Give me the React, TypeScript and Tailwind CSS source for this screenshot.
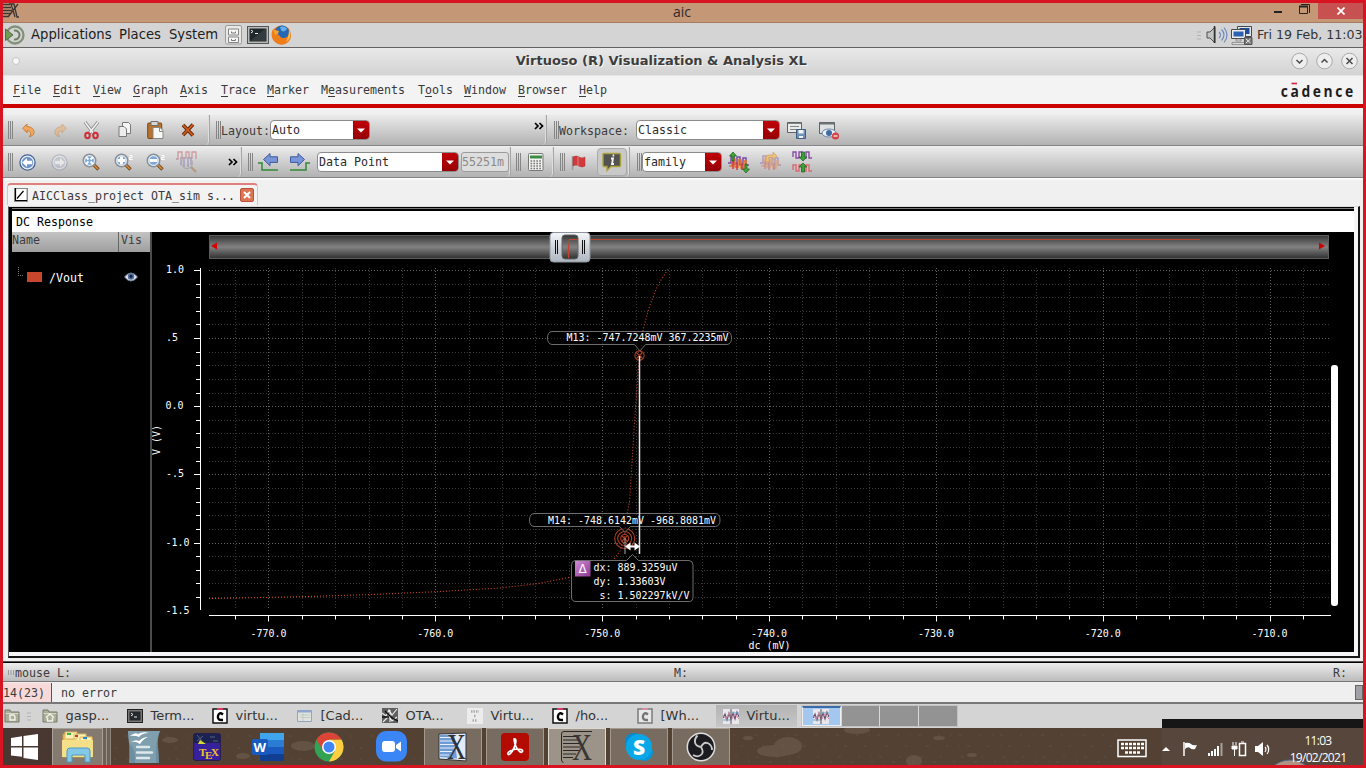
import React from "react";

type Kids = { children?: React.ReactNode };

const MENU: [string, string, string, string][] = [
  ["", "F", "ile", "w-10"],
  ["", "E", "dit", "w-10"],
  ["", "V", "iew", "w-10"],
  ["", "G", "raph", "w-[47px]"],
  ["", "A", "xis", "w-[41px]"],
  ["", "T", "race", "w-[46px]"],
  ["", "M", "arker", "w-[54px]"],
  ["M", "e", "asurements", "w-[97px]"],
  ["T", "o", "ols", "w-[46px]"],
  ["", "W", "indow", "w-[54px]"],
  ["", "B", "rowser", "w-[61px]"],
  ["", "H", "elp", "w-10"],
];

function Grip() {
  return (
    <div className="flex h-[18px] w-[5px] shrink-0 justify-between">
      <i className="w-px bg-[#858585]" />
      <i className="w-px bg-[#858585]" />
      <i className="w-px bg-[#858585]" />
    </div>
  );
}

function Group({ w, children }: Kids & { w: string }) {
  return (
    <div
      className={
        "flex h-full shrink-0 items-center rounded-br-[4px] border-r border-r-[#a5a5a5] pl-[5px] shadow-[inset_-1px_0_0_#dedede] " + w
      }
    >
      {children}
    </div>
  );
}

function Combo({ w, label }: { w: string; label: string }) {
  return (
    <div className={"flex h-[20px] shrink-0 overflow-hidden rounded-[4px] border border-[#8b8b8b] bg-white text-[#2b2b2b] " + w}>
      <span className="flex-1 pl-[1px] leading-[18px]">{label}</span>
      <span className="flex w-[16px] items-center justify-center bg-linear-to-b from-[#c00008] to-[#960005]">
        <svg width="8" height="5" viewBox="0 0 8 5">
          <path d="M0 0.5h8L4 4.5z" fill="#fff" />
        </svg>
      </span>
    </div>
  );
}

function Ico({ w, h, className, children }: Kids & { w: number; h: number; className?: string }) {
  return (
    <svg width={w} height={h} viewBox={`0 0 ${w} ${h}`} className={"block shrink-0 " + (className ?? "")}>
      {children}
    </svg>
  );
}

function More() {
  return (
    <Ico w={10} h={8}>
      <path d="M1 1l3 3-3 3M5.500 1l3 3-3 3" fill="none" stroke="#000" strokeWidth="1.700" />
    </Ico>
  );
}

function Undo({ flip }: { flip?: boolean }) {
  return (
    <g transform={flip ? "translate(13 0) scale(-1 1)" : undefined} opacity={flip ? 0.45 : 1}>
      <path d="M0.7 5.2 5 1v2.6c5 .2 7.200 2.800 7 6C11.800 12.500 9 13.600 7 13.600 9.500 12 9.600 8 5 7.600v2.300z" fill="#f0a860" stroke="#c47a2c" strokeWidth=".9" />
    </g>
  );
}

function Cut() {
  return (
    <g fill="none">
      <path d="M2 1 11 13M15 1 5.500 13" stroke="#8b8f8d" strokeWidth="3.200" />
      <path d="M2 1 10.500 12.500M15 1 6 12.500" stroke="#f1f1f1" strokeWidth="1.500" />
      <ellipse cx="4.500" cy="14.500" rx="2.300" ry="2.700" stroke="#cf2c35" strokeWidth="2" />
      <ellipse cx="12.500" cy="14.500" rx="2.300" ry="2.700" stroke="#cf2c35" strokeWidth="2" />
    </g>
  );
}

function Lens({ kind }: { kind: "fit" | "in" | "out" }) {
  return (
    <g>
      <path d="M11 11l5.500 5.500" stroke="#7c4a1c" strokeWidth="3.400" />
      <path d="M11.500 11.500l4.500 4.500" stroke="#d58b3c" strokeWidth="1.600" />
      <circle cx="7.500" cy="7.500" r="6.200" fill="#7ba8d6" stroke="#8c9093" strokeWidth="1.600" />
      <circle cx="7.500" cy="7.500" r="4.900" fill="none" stroke="#e6edf5" strokeWidth="1.100" />
      {kind === "fit" && <path d="M4 4l2.500 2.500M11 4 8.500 6.500M4 11l2.500-2.500M11 11 8.500 8.500" stroke="#fff" strokeWidth="1.800" />}
      {kind === "in" && <path d="M7.500 3.500v8M3.500 7.500h8" stroke="#fff" strokeWidth="3" />}
      {kind === "out" && <path d="M3.500 7.500h8" stroke="#fff" strokeWidth="3" />}
      {kind !== "fit" && <path d="M15.500 2.500h2.500v2h-2.500v2H18.500" fill="none" stroke="#fff" strokeWidth="1" />}
    </g>
  );
}

function NavDot({ flip }: { flip?: boolean }) {
  return (
    <g transform={flip ? "translate(17 0) scale(-1 1)" : undefined} opacity={flip ? 0.5 : 1}>
      <circle cx="8.500" cy="8.500" r="7.600" fill={flip ? "#b4bac8" : "#6f93c8"} stroke={flip ? "#8a92a6" : "#3d5c8f"} strokeWidth="1.200" />
      <circle cx="8.500" cy="8.500" r="6.300" fill="none" stroke="#e9eff8" strokeWidth="1.200" />
      <path d="M3.200 8.500 8 4v2.800h5.200v3.400H8V13z" fill="#fff" />
    </g>
  );
}

function StepArrow({ flip }: { flip?: boolean }) {
  return (
    <g transform={flip ? "translate(21 0) scale(-1 1)" : undefined}>
      <path d="M0 11h4v7h16" fill="none" stroke="#2f8a36" strokeWidth="1.500" />
      <path d="M5.500 7.500 12 1.500v3.300h7.500v5.600H12v3.300z" fill="#7895d8" stroke="#3d5aa0" strokeWidth="1" />
    </g>
  );
}

function WaveBits({ faded }: { faded?: boolean }) {
  return (
    <g fill="none" strokeWidth="1.500" opacity={faded ? 0.42 : 1}>
      <path d="M0 11h3V4h3v8h3V5h3v8h3V6h3v7h3" stroke="#7a49a8" />
      <path d="M1 14h3V7h3v8h3V8h3v8h3V9h2v5" stroke="#e8702a" />
      <path d="M5 17V9M9 18v-8M14 18v-7" stroke="#cf3a3a" />
    </g>
  );
}

function TopBars() {
  return (
    <>
      <div className="flex h-[20px] shrink-0 items-start border-b border-[#a87c60] bg-[#c49777]">
        <Ico w={16} h={16}>
          <path d="M0 1.500h7M0 4.500h8M0 7.500h9M0 10.500h8M0 13.500h6M6 1h5l3 13h2M15 1 5 14M8 1l4 13" fill="none" stroke="#3b3533" strokeWidth="1.300" />
        </Ico>
        <div className="flex-1 pl-[75px] text-center font-['Open_Sans',sans-serif] text-[14px] leading-[18px] text-[#33292a]">aic</div>
        <div className="flex h-[16px]">
          <Ico w={48} h={16}>
            <path d="M4 9h8" stroke="#222" strokeWidth="2" />
            <path d="M29.500 3.500h8v7h-8zM31 1.500h8.500V10" fill="none" stroke="#222" />
            <path d="M29 3.500h9" stroke="#222" strokeWidth="2" />
          </Ico>
          <div className="flex w-[45px] items-center justify-center bg-[#c75050]">
            <Ico w={8} h={8}>
              <path d="M.5.5l7 7M7.500.5l-7 7" stroke="#fff" strokeWidth="1.700" />
            </Ico>
          </div>
        </div>
      </div>
      <div className="flex h-[25px] shrink-0 items-center border-b border-[#626262] bg-[#d4d4d4] font-['DejaVu_Sans',sans-serif] text-[13.2px] text-[#1c1c1c]">
        <Ico w={22} h={20}>
          <circle cx="12" cy="10" r="8.500" fill="none" stroke="#81917a" strokeWidth="2.300" />
          <path d="M11 5.500a4.600 4.600 0 1 1 0 9" fill="none" stroke="#6c7d64" strokeWidth="2" />
          <path d="M0 3v14" stroke="#d4d4d4" strokeWidth="6" />
          <path d="M2.500 4v11.500L10 10z" fill="#6f9b55" stroke="#506e44" />
        </Ico>
        <span className="ml-[6px] w-[88px]">Applications</span>
        <span className="w-[50px]">Places</span>
        <span className="w-[56px]">System</span>
        <Ico w={18} h={20}>
          <rect x=".5" y=".5" width="16" height="18.500" rx="1.500" fill="#e8e8e6" stroke="#9b9b98" />
          <path d="M3.500 4h10v6h-10zM3.500 12h10v5.500h-10z" fill="#f7f7f7" stroke="#858585" />
          <path d="M6.500 6.500v1.500h4V6.500M6.500 14v1.500h4V14" fill="none" stroke="#777" />
        </Ico>
        <Ico w={22} h={18} className="ml-[4px]">
          <rect x=".5" y=".5" width="21" height="17" fill="#b9bbb8" stroke="#555" />
          <rect x="2.500" y="2.500" width="17" height="13" fill="#20272a" />
          <path d="M4 4l2 1.500L4 7M8 7.500h3" fill="none" stroke="#eee" />
          <path d="M3 15 18 3h1v12z" fill="#485053" opacity=".5" />
        </Ico>
        <Ico w={21} h={20} className="ml-[2px]">
          <circle cx="10.500" cy="10" r="9.500" fill="#e3661b" />
          <circle cx="11" cy="7.500" r="7" fill="#2468b4" />
          <path d="M2 4c-3 6-1 11 3 13.500 5 4 13 2 14.500-5l-1-3c-2 4-8 5-10 1L6 9z" fill="#ef7d1a" />
          <path d="M2 4l2 1 4 1-1 3-3 1z" fill="#f6a12b" />
          <path d="M9 2c4-1 6 0 7 2-2 3-5 3-6 1z" fill="#67aeea" />
          <path d="M18 5c3 4 1 10-3 12 2-4 3-8 3-12z" fill="#ffc03c" />
        </Ico>
        <div className="flex-1" />
        <Ico w={4} h={9}>
          <path d="M0 1h4M0 4.500h4M0 8h4" stroke="#b3b3b3" />
        </Ico>
        <Ico w={22} h={20} className="ml-[5px]">
          <path d="M1 7h3l5-5v16l-5-5H1z" fill="#c2c5c1" stroke="#4c514e" />
          <path d="M8.500 1v17" stroke="#2f3331" strokeWidth="1.500" />
          <path d="M13 7q3 3 0 6M15.500 4.500q5 5 0 11M18 2.500q6 7.500 0 15" fill="none" stroke="#6b87bd" strokeWidth="1.100" />
        </Ico>
        <Ico w={23} h={20} className="ml-[2px]">
          <path d="M7.500 1.500h14v10h-14z" fill="#e6e6e6" stroke="#46494a" />
          <path d="M9.500 3h10v6h-10z" fill="#1d4e96" />
          <path d="M1.500 4.500h14v9h-14z" fill="#ececec" stroke="#46494a" />
          <path d="M3.500 6.500h10v5h-10z" fill="#2a61b0" />
          <path d="M6 14h5v2H6zM2 17.500h13v2H2z" fill="#ddd" stroke="#666" strokeWidth=".6" />
          <path d="M14.500 12.500h7.500v7h-7.500z" fill="#777" stroke="#555" />
          <path d="M16 14l4.500 4M20.500 14 16 18" stroke="#eee" />
        </Ico>
        <span className="ml-[4px] w-[106px] whitespace-nowrap text-[12.600px] text-[#333]">Fri 19 Feb, 11:03</span>
      </div>
      <div className="flex h-[27px] shrink-0 items-center bg-linear-to-b from-[#e9e9e9] to-[#d3d3d3] pb-[2px]">
        <i className="ml-[9px] size-[8px] rounded-full border border-[#c6c6c6] bg-[#f7f7f7]" />
        <div className="flex-1 pl-[14px] text-center font-['DejaVu_Sans',sans-serif] text-[13px] font-bold text-[#3d3d3d] [text-shadow:1px_1px_0_#f4f4f4]">
          Virtuoso (R) Visualization &amp; Analysis XL
        </div>
        {["M5.500 8 8.500 11l3-3", "M5.500 10.500l3-3 3 3", "M5.500 6l6 6M11.500 6l-6 6"].map((d) => (
          <Ico key={d} w={17} h={18} className="ml-[2.500px] mr-[5.500px] last:mr-[5px]">
            <circle cx="8.500" cy="9" r="7.800" fill="#eeeeee" stroke="#a9a9a9" strokeWidth="1" />
            <path d={d} fill="none" stroke="#4a4a4a" strokeWidth="1.500" />
          </Ico>
        ))}
      </div>
      <div className="flex h-[29px] shrink-0 items-center border-t border-[#e6e6e6] bg-[#f3f3f3] pl-[10px] text-[#3a3a3a]">
        {MENU.map(([pre, key, rest, w]) => (
          <span key={pre + key + rest} className={"shrink-0 " + w}>
            {pre}
            <u className="underline-offset-2">{key}</u>
            {rest}
          </span>
        ))}
        <div className="flex-1" />
        <svg width="76" height="20" viewBox="0 0 76 20" className="mr-[8px] block">
          <text x="2.200" y="16.500" textLength="86" lengthAdjust="spacing" fontFamily="Open Sans" fontWeight="700" fontSize="16.500" fill="#1d1d1f" transform="scale(.84 1)">
            cadence
          </text>
          <path d="M12.500 3.500h5.500" stroke="#d8213f" strokeWidth="1.600" />
        </svg>
      </div>
      <div className="h-[4px] shrink-0 bg-[#cc0000]" />
      <div className="h-[7px] shrink-0 bg-[#f0f0f0]" />
    </>
  );
}

const BAR = "flex h-[31px] shrink-0 border-b border-[#858585] bg-linear-to-b from-[#ebebeb] to-[#b2b2b2]";

function Toolbars() {
  return (
    <>
      <div className={BAR}>
        <Group w="w-[207px]">
          <Grip />
          <Ico w={13} h={15} className="ml-[9px]"><Undo /></Ico>
          <Ico w={13} h={15} className="ml-[19px]"><Undo flip /></Ico>
          <Ico w={17} h={19} className="ml-[16px]"><Cut /></Ico>
          <Ico w={14} h={16} className="ml-[18px]">
            <path d="M4.500.5h6l2 2v9h-8z" fill="#f5f5f5" stroke="#777b78" />
            <path d="M1 4.500h5l2.500 2.500v7.500H1z" fill="#ededed" stroke="#777b78" />
          </Ico>
          <Ico w={17} h={19} className="ml-[15px]">
            <rect x=".7" y="2" width="14" height="15.500" rx="1" fill="#b9722c" stroke="#7d4716" />
            <path d="M4 0.500h7v4H4z" fill="#d5d7d4" stroke="#6d6f6c" />
            <path d="M6 6.500h7l3 3v8H6z" fill="#f7f7f5" stroke="#878987" />
            <path d="M12.500 7v3.500H16" fill="none" stroke="#878987" />
          </Ico>
          <Ico w={14} h={14} className="ml-[17px]">
            <path d="M2 2l10 10.500M12 1.500 2 12" stroke="#6b2408" strokeWidth="3.600" />
            <path d="M2 2l10 10.500M12 1.500 2 12" stroke="#cf6420" strokeWidth="1.700" />
          </Ico>
        </Group>
        <Group w="w-[337px]">
          <span className="ml-[1px]"><Grip /></span>
          <span className="w-[49px] pt-[2px]">Layout:</span>
          <Combo w="w-[100px]" label="Auto" />
          <span className="ml-[164px] pb-[9px]"><More /></span>
        </Group>
        <div className="flex items-center pl-[7px]">
          <Grip />
          <span className="w-[77px] pt-[2px]">Workspace:</span>
          <Combo w="w-[144px]" label="Classic" />
          <Ico w={20} h={18} className="ml-[7px]">
            <path d="M.5 1.500h14v10H.5z" fill="#e9ebe8" stroke="#5f6365" />
            <path d="M1 2.500h13M3 5.500h9M3 8.500h7" stroke="#7e8587" />
            <path d="M9.500 8.500h9v9h-9z" fill="#7090b8" stroke="#3f5c83" />
            <path d="M11.500 9h5v3.500h-5zM12 15h4v2h-4z" fill="#f2f4f6" />
          </Ico>
          <Ico w={21} h={19} className="ml-[12px]">
            <path d="M.5 1.500h15v11H.5z" fill="#dfe2e2" stroke="#5f6365" />
            <path d="M1 2.500h14" stroke="#6d7375" strokeWidth="2" />
            <ellipse cx="10" cy="12" rx="7" ry="4" fill="#e9f0f8" stroke="#6b86a8" />
            <circle cx="10" cy="12" r="3" fill="#406ba3" />
            <circle cx="16.500" cy="15" r="3.600" fill="#d64242" />
            <path d="M14.500 15h4" stroke="#fff" strokeWidth="1.200" />
          </Ico>
        </div>
      </div>
      <div className={BAR + " mt-px"}>
        <Group w="w-[239px]">
          <Grip />
          <Ico w={17} h={17} className="ml-[6px]"><NavDot /></Ico>
          <Ico w={17} h={17} className="ml-[15px]"><NavDot flip /></Ico>
          <Ico w={19} h={19} className="ml-[14px]"><Lens kind="fit" /></Ico>
          <Ico w={20} h={19} className="ml-[13px]"><Lens kind="in" /></Ico>
          <Ico w={20} h={19} className="ml-[12px]"><Lens kind="out" /></Ico>
          <Ico w={23} h={22} className="ml-[10px] opacity-45">
            <path d="M0 8h2V1h4v6h4V1h3v6h3V1h4v7" fill="none" stroke="#b84a52" strokeWidth="1.300" />
            <path d="M5 6v8M8 6v10M12 7v9M15 6v8" stroke="#6b5d9d" strokeWidth="1.300" />
            <circle cx="11" cy="12" r="5.500" fill="none" stroke="#8c7796" />
            <path d="M15 16l5 5" stroke="#b06d33" strokeWidth="2.400" />
          </Ico>
          <span className="ml-[29px]"><More /></span>
        </Group>
        <Group w="w-[269px]">
          <span className="ml-[1px]"><Grip /></span>
          <Ico w={21} h={20} className="ml-[5px]"><StepArrow /></Ico>
          <Ico w={21} h={20} className="ml-[10px]"><StepArrow flip /></Ico>
          <span className="ml-[7px]"><Combo w="w-[142px]" label="Data Point" /></span>
          <div className="ml-[2px] h-[20px] w-[48px] shrink-0 rounded-[3px] border border-[#9b9b9b] bg-[#dedede] leading-[18px] text-[#8a8a8a]">
            55251m
          </div>
        </Group>
        <Group w="w-[43px]">
          <Grip />
          <Ico w={16} h={18} className="ml-[7px]">
            <rect x=".5" y=".5" width="14.500" height="17" rx="1" fill="#f2f2f0" stroke="#777" />
            <path d="M2 2.500h12v3H2z" fill="#3d8c45" />
            <path d="M2.500 8h11M2.500 10.500h11M2.500 13h11M2.500 15.500h11" stroke="#777" strokeWidth="1.300" strokeDasharray="1.700 1.200" />
          </Ico>
        </Group>
        <Group w="w-[76px]">
          <span className="ml-[1px]"><Grip /></span>
          <Ico w={15} h={15} className="ml-[6px]">
            <path d="M1.500 1v14" stroke="#999" strokeWidth="1.500" />
            <path d="M2 2q3-2 6 0t6 0v9q-3 2-6 0t-6 0z" fill="#d13a3d" stroke="#b52b2f" strokeWidth=".5" />
            <path d="M7 1.800v9" stroke="#e98082" />
          </Ico>
          <span className="ml-[11px] flex h-[28px] w-[30px] shrink-0 items-center justify-center rounded-[4px] border border-[#a9a9a9] bg-[#c9c9c9]">
            <Ico w={20} h={20}>
              <path d="M2 1.500h15.500q1 0 1 1v11q0 1-1 1H9l-4 4v-4H2q-1 0-1-1v-11q0-1 1-1z" fill="#525250" stroke="#aca33a" strokeWidth="1.400" />
              <path d="M10.600 3.500h1.600M9 6.500h2l-1 5.500h2" stroke="#f5f5f5" strokeWidth="1.800" fill="none" />
            </Ico>
          </span>
        </Group>
        <div className="flex items-center pl-[7px]">
          <Grip />
          <Combo w="w-[80px]" label="family" />
          <Ico w={22} h={21} className="ml-[6px]">
            <WaveBits />
            <path d="M4 9V4H1.500L5 0l3.500 4H6v5zM17 12v5h-2.500l3.500 4 3.500-4H19v-5z" fill="#3daa36" stroke="#1c5d1c" strokeWidth=".7" />
          </Ico>
          <Ico w={22} h={21} className="ml-[10px]">
            <WaveBits faded />
            <path d="M6 10V5q0-2 3-2h4V0l4 4-4 4V5.500H9V10z" fill="#ecc07c" stroke="#c99a55" strokeWidth=".6" />
          </Ico>
          <Ico w={22} h={22} className="ml-[10px]">
            <path d="M1 6V1h3v6h3V1h3v6h4V1h3v6h3" fill="none" stroke="#8a4ba8" strokeWidth="1.400" />
            <path d="M1 19v-5h3v6h3v-6h3v6h4v-6h3v6h3" fill="none" stroke="#dd6870" strokeWidth="1.400" />
            <path d="M9.500 1v5H7L11 10l4-4h-2.500V1zM9.500 21v-5H7l4-4 4 4h-2.500v5z" fill="#3aa238" stroke="#1c5d1c" strokeWidth=".7" />
          </Ico>
        </div>
      </div>
    </>
  );
}

const xAt = (i: number) => Math.round(235.1 + i * 33.370) + 0.5;
const yAt = (i: number) => Math.round(269.9 + i * 13.630) + 0.5;

function Plot() {
  const xs = Array.from({ length: 33 }, (_, i) => i);
  const ys = Array.from({ length: 25 }, (_, i) => i);
  return (
    <svg width="1202" height="420" viewBox="152 232 1202 420" className="block shrink-0 bg-black">
      <defs>
        <linearGradient id="rail" x1="0" y1="0" x2="0" y2="1">
          <stop offset="0" stopColor="#353535" />
          <stop offset=".5" stopColor="#828282" />
          <stop offset="1" stopColor="#303030" />
        </linearGradient>
        <linearGradient id="thumb" x1="0" y1="0" x2="0" y2="1">
          <stop offset="0" stopColor="#f5f7fa" />
          <stop offset=".5" stopColor="#cfd4da" />
          <stop offset="1" stopColor="#aeb6c0" />
        </linearGradient>
        <linearGradient id="delta" x1="0" y1="0" x2="1" y2="1">
          <stop offset="0" stopColor="#d08ad4" />
          <stop offset="1" stopColor="#8d3a94" />
        </linearGradient>
      </defs>
      <rect x="209.500" y="235.500" width="1119" height="23" fill="url(#rail)" stroke="#5c5c5c" />
      <path d="M590 239.500H1200" stroke="#b8432c" />
      <path d="M217 242.500v7l-6-3.500zM1319 242.500v7l6-3.500z" fill="#d40000" />
      <rect x="550" y="232.500" width="40" height="29.500" rx="3.500" fill="url(#thumb)" stroke="#8e959c" />
      <rect x="562" y="235" width="16" height="24" rx="3" fill="url(#rail)" stroke="#666" />
      <path d="M568.500 258v-10l1-8.500h8" stroke="#c8412b" fill="none" strokeWidth="1.200" />
      <path d="M555.500 240v14M557.500 240v14M582.500 240v14M584.500 240v14" stroke="#111" />
      <g strokeDasharray="1 2">
        {xs.map((i) => (
          <path key={i} d={`M${xAt(i)} 268V609`} stroke={i % 5 === 1 ? "#666" : "#383838"} />
        ))}
        {ys.map((i) => (
          <path key={i} d={`M209 ${yAt(i)}H1329`} stroke={i % 5 === 0 ? "#626262" : "#383838"} />
        ))}
      </g>
      <g stroke="#fff">
        <path d="M200.500 268V610M209 615.500H1331" />
        {ys.map((i) => (
          <path key={i} d={`M${i % 5 === 0 ? 194 : 196} ${yAt(i)}H201`} />
        ))}
        {xs.map((i) => (
          <path key={i} d={`M${xAt(i)} 615V${i % 5 === 1 ? 621.500 : 619.500}`} />
        ))}
      </g>
      <path
        d="M209 598.500 L290 597 L372 594.500 L440 591.500 L500 588 L535 584 L572 577 L600 568 L612 562 L620 551 L624 539 L627 515 L629.700 500 L634 430 L638 372 L641 350 L643 330 L648 311 L653 297 L658 285 L668 269"
        fill="none"
        stroke="#d8452b"
        strokeWidth="1.100"
        strokeDasharray="1 2"
      />
      <g fill="none" stroke="#b03c24" strokeWidth="1.100">
        <circle cx="639.500" cy="355.500" r="4.600" />
        <path d="M636.500 352.500l6 6M642.500 352.500l-6 6" />
        <circle cx="624.700" cy="538.500" r="4" />
        <circle cx="624.700" cy="538.500" r="7" />
        <circle cx="624.700" cy="538.500" r="10" />
        <path d="M621.500 535.500l6 6M627.500 535.500l-6 6" />
      </g>
      <g fill="#000" fillOpacity=".6" stroke="#6c6c6c">
        <path d="M552 331.500H727Q731.500 332 731.500 338T727 344.500H645.500L640 351 634.500 344.500H552Q547.500 344 547.500 338T552 331.500z" />
        <path d="M534 513.500H715.500Q720 514 720 520T715.500 526.500H630.500L625 532.500 619.500 526.500H534Q529.500 526 529.500 520T534 513.500z" />
        <path d="M575 560.500H626.500L632.500 554.500 638.500 560.500H689Q693 561 693 565V597Q693 601.500 689 601.500H576Q571.500 601.500 571.500 597V565Q571.500 561 575 560.500z" fillOpacity=".9" />
      </g>
      <path d="M639.500 356V554" stroke="#e4e4e4" strokeWidth="1.500" />
      <path d="M625 538V554" stroke="#aaa" />
      <path d="M625 546.500l5.500-4v3h4v-3l5.500 4-5.500 4v-3h-4v3z" fill="#fff" />
      <rect x="575" y="561" width="15.500" height="15.500" fill="url(#delta)" />
      <g fill="#fff" fontFamily="DejaVu Sans Mono, monospace" fontSize="9.970">
        <text x="578.500" y="573" fontSize="12" fontFamily="DejaVu Sans">Δ</text>
        <text x="566.500" y="341">M13: -747.7248mV 367.2235mV</text>
        <text x="548" y="524">M14: -748.6142mV -968.8081mV</text>
        <text x="593.500" y="571">dx: 889.3259uV</text>
        <text x="593.500" y="585">dy: 1.33603V</text>
        <text x="599.500" y="599">s: 1.502297kV/V</text>
        <text x="166" y="273">1.0</text>
        <text x="166" y="341">.5</text>
        <text x="165.500" y="409">0.0</text>
        <text x="166" y="477">-.5</text>
        <text x="165.500" y="546">-1.0</text>
        <text x="165.500" y="614">-1.5</text>
        {["-770.0", "-760.0", "-750.0", "-740.0", "-730.0", "-720.0", "-710.0"].map((t, i) => (
          <text key={t} x={250.500 + i * 166.850} y="637">{t}</text>
        ))}
        <text x="748.500" y="648.500">dc (mV)</text>
        <text transform="translate(160 455) rotate(-90)">V (V)</text>
      </g>
      <rect x="1331" y="365" width="7" height="241" rx="3" fill="#fff" />
    </svg>
  );
}

function Workspace() {
  return (
    <div className="flex h-[485px] shrink-0 flex-col bg-[#f0f0f0]">
      <div className="flex h-[28px] shrink-0 items-end border-t-2 border-[#fafafa] pb-px pl-[4px]">
        <div className="flex h-[22px] w-[251px] items-center rounded-t-[4px] border border-b-0 border-t-2 border-[#c9c9c9] border-t-[#df7f80] bg-[#f3f3f3] pl-[6px]">
          <Ico w={14} h={14}>
            <path d="M0 0h14v14H0z" fill="#8a8a8a" />
            <path d="M1 1h11.500v11.500H1z" fill="#fff" />
            <path d="M1.500 0v12.500H13M3 10.500 9.500 3" fill="none" stroke="#000" strokeWidth="1.200" />
          </Ico>
          <span className="ml-[4px] w-[208px] whitespace-nowrap pt-[2px]">AICClass_project OTA_sim s...</span>
          <span className="flex size-[14px] shrink-0 items-center justify-center rounded-[2px] border border-[#b8523a] bg-[#dd7355]">
            <Ico w={8} h={8}>
              <path d="M1 1l6 6M7 1 1 7" stroke="#fff" strokeWidth="2" />
            </Ico>
          </span>
        </div>
      </div>
      <div className="ml-[5px] mr-[3px] flex h-[452px] w-[1352px] shrink-0 flex-col border-2 border-l border-t border-[#151515] border-l-[#555] border-t-[#ddd] bg-[#f6f6f8] pb-[4px] pr-[4px]">
        <div className="flex h-[445px] w-[1345px] shrink-0 flex-col border-l-[3px] border-black">
          <div className="h-px shrink-0 bg-black" />
          <div className="h-px shrink-0 bg-[#777]" />
          <div className="h-[2px] shrink-0 bg-black" />
          <div className="h-[21px] shrink-0 bg-white pl-[4px] leading-[22px] text-black">DC Response</div>
          <div className="flex">
            <div className="flex h-[420px] w-[138px] shrink-0 flex-col bg-black">
              <div className="flex h-[20px] bg-linear-to-b from-[#c3c3c3] to-[#9f9f9f] leading-[17px] text-[#3c3c3c]">
                <span className="w-[107px] border-r border-[#666]">Name</span>
                <span className="pl-[2px]">Vis</span>
              </div>
              <div className="flex h-[49px] items-center pl-[6px] text-white">
                <i className="mb-[10px] h-[9px] w-[5px] border-b border-l border-dotted border-[#777]" />
                <i className="ml-[4px] h-[10px] w-[15px] bg-[#c8462c]" />
                <span className="ml-[7px] w-[75px] pt-[2px]">/Vout</span>
                <Ico w={14} h={10}>
                  <path d="M.5 5Q7-3 13.500 5 7 13 .5 5z" fill="#dfe6f2" stroke="#6c7890" />
                  <circle cx="7" cy="4.500" r="3.200" fill="#4e6b9a" />
                  <circle cx="7" cy="4.500" r="1.400" fill="#111d36" />
                </Ico>
              </div>
            </div>
            <div className="w-[2px] shrink-0 bg-[#4b4b4b]" />
            <Plot />
          </div>
        </div>
      </div>
      <div className="mt-[3px] h-[2px] shrink-0 border-t border-[#555] bg-black" />
    </div>
  );
}

function CMark({ dim }: { dim?: boolean }) {
  return (
    <g opacity={dim ? 0.45 : 1}>
      <rect x="1" y="1" width="14" height="14" fill="#fff" stroke="#111" strokeWidth="1.500" />
      <path d="M5 0h6v2H5z" fill="#d63a63" />
      <path d="M11 6.500Q7 3.500 6 8t5 4" stroke="#000" strokeWidth="2.400" fill="none" />
    </g>
  );
}

function WaveMark() {
  return (
    <g>
      <path d="M0 0h16v15H0z" fill="#e9e6ec" />
      <path d="M0 9l2-4 2 6 2-7 2 6 2-6 2 6 2-7 2 5" fill="none" stroke="#6a5272" strokeWidth="1.200" />
      <path d="M0 6l3 4 3-6 3 6 3-5 4 5" fill="none" stroke="#d48aa0" />
      <path d="M0 11h7M9 4h7" stroke="#6fa5c2" />
      <path d="M8 0v15" stroke="#555" />
    </g>
  );
}

function Folder({ home }: { home?: boolean }) {
  return (
    <g>
      <path d="M1 2h5l1 2h8v10H1z" fill="#abae98" stroke="#777b68" />
      <path d="M1.500 5.500h13" stroke="#d6d8c6" />
      {home ? <path d="M4 9.500 8 6l4 3.500M5.500 9.500V13h5V9.500" fill="none" stroke="#f3f3ea" strokeWidth="1.400" /> : <path d="M6 7h4l1 2v3H6z" fill="none" stroke="#f3f3ea" strokeWidth="1.400" />}
    </g>
  );
}

const TASKS: [string, React.ReactNode][] = [
  ["gasp...", <Folder home />],
  ["Term...", <g><rect x=".5" y="1.500" width="15" height="13" fill="#777" stroke="#222" /><rect x="2.500" y="3.500" width="11" height="9" fill="#24292b" /><path d="M4 5l2 1.500L4 8M7 9h3" fill="none" stroke="#eee" /></g>],
  ["virtu...", <CMark />],
  ["[Cad...", <g><path d="M.5 2.500h14v11H.5z" fill="#dfe3df" stroke="#93a3c1" /><path d="M1 3.500h13" stroke="#8fa5d3" strokeWidth="2" /><path d="M3 7h10M3 9.500h10M6 5v8" stroke="#c5c9c4" /></g>],
  ["OTA...", <g><path d="M0 0h16v15H0z" fill="#606060" /><path d="M0 5l4 3 3-6 3 5 5-6M1 14l6-6 3 5 5-4M8 2v12" fill="none" stroke="#eee" strokeWidth="1.100" /><path d="M3 3l7 7 6 3M0 9h7" fill="none" stroke="#111" strokeWidth="1.500" /></g>],
  ["Virtu...", <g><path d="M0 0h16v16H0z" fill="#ececec" /><path d="M4 3.500h8M7 8h2M5.500 12.500h5" stroke="#aaa" strokeWidth="2.500" strokeDasharray="1.500 1" /></g>],
  ["/ho...", <CMark />],
  ["[Wh...", <CMark dim />],
];

function BottomBars() {
  return (
    <>
      <div className="flex h-[19px] shrink-0 items-center border-b border-[#777] bg-linear-to-b from-[#ededed] to-[#bcbcbc] pl-[5px] pt-px text-[#3b3b3b]">
        <Ico w={6} h={6}><path d="M.5 0v5M3 0v5M5.500 0v5" stroke="#999" /></Ico>
        <span className="ml-[1px] w-[659px]">mouse L:</span>
        <span className="w-[659px]">M:</span>
        <span>R:</span>
      </div>
      <div className="mt-px flex h-[21px] shrink-0 items-center justify-between border-b-2 border-[#777] bg-[#efefef] text-[#3b3b3b]">
        <div className="flex h-full items-center">
          <span className="flex h-full w-[49px] items-center border-r border-[#555] bg-[#f7d9d9]">14(23)</span>
          <span className="pl-[9px]">no error</span>
        </div>
        <i className="h-[15px] w-[8px] border border-[#666] bg-[#a0a0a7]" />
      </div>
      <div className="flex h-[24px] shrink-0 items-center bg-[#d4d4d4] font-['DejaVu_Sans',sans-serif] text-[13px] text-[#333]">
        <Ico w={17} h={16} className="ml-[1px]"><Folder /></Ico>
        <Ico w={4} h={9} className="ml-[6px]"><path d="M0 1h4M0 4.500h4M0 8h4" stroke="#b3b3b3" /></Ico>
        <div className="ml-[10.500px] flex">
          {TASKS.map(([label, icon], i) => (
            <div key={i} className="flex w-[85px] items-center">
              <Ico w={16} h={16}>{icon}</Ico>
              <span className="ml-[8px]">{label}</span>
            </div>
          ))}
        </div>
        <div className="-ml-[6px] flex h-[22px] w-[81px] items-center bg-linear-to-b from-[#b4b4b4] to-[#c6c6c6] pl-[7px]">
          <Ico w={16} h={15}><WaveMark /></Ico>
          <span className="ml-[8px]">Virtu...</span>
        </div>
        <div className="ml-[4px] flex h-[22px] w-[157px] gap-px border border-[#c2c2c2] bg-[#d9d9d9]">
          <span className="flex w-[39px] items-center justify-center border border-t-2 border-[#eee] border-t-[#3c6ca8] bg-[#a3c7ef]">
            <Ico w={16} h={15}><WaveMark /></Ico>
          </span>
          <span className="flex-1 bg-[#939393]" />
          <span className="flex-1 bg-[#939393]" />
          <span className="flex-1 bg-[#939393]" />
        </div>
        <div className="flex-1" />
        <div className="w-[201px] self-end bg-[#161616] pt-[9px]" />
      </div>
    </>
  );
}

function TaskButton({ active, children }: Kids & { active?: boolean }) {
  return (
    <div className={"mr-[4px] flex h-full w-[58px] shrink-0 items-center justify-center border border-b-0 " + (active ? "border-[#dcd8d2] bg-[#9c9389]" : "border-[#a39a8f] bg-[#786c60]")}>
      {children}
    </div>
  );
}

function Taskbar() {
  return (
    <div className="relative flex h-[37px] shrink-0 items-center bg-[#544336]">
      <svg width="1360" height="37" viewBox="0 0 1360 37" className="absolute inset-0">
        <path d="M0 0h1360v37H0z" fill="#534234" />
        <path d="M0 0h90v37H0z" fill="#493831" />
        <g fill="#8a7766" opacity=".32">
          <ellipse cx="785" cy="18" rx="14" ry="9" />
          <ellipse cx="772" cy="23" rx="18" ry="6" />
          <ellipse cx="854" cy="2" rx="13" ry="4" />
          <ellipse cx="911" cy="33" rx="8" ry="6" />
          <ellipse cx="745" cy="10" rx="5" ry="2" />
          <ellipse cx="969" cy="27" rx="5" ry="2" />
          <ellipse cx="300" cy="18" rx="12" ry="5" />
          <ellipse cx="240" cy="28" rx="7" ry="3" />
          <ellipse cx="167" cy="12" rx="8" ry="3" />
          <ellipse cx="936" cy="10" rx="6" ry="2" />
        </g>
        <g stroke="#8b7657" strokeWidth="1" opacity=".25" strokeDasharray="2 11 1 7 3 17">
          <path d="M730 7h390M738 18h380M732 29h400M745 34h370M60 8h350M90 20h320M70 31h350" />
        </g>
        <path d="M1159 0h201v37h-201z" fill="#57463b" />
        <circle cx="1287" cy="57" r="25" fill="#b19383" stroke="#496d8c" />
      </svg>
      <div className="relative flex h-full w-full items-center">
        <Ico w={28} h={26} className="ml-[8px]">
          <path d="M0 4l11-1.700V12H0zM12.500 2 27 0v12H12.500zM0 13.500h11v9.300L0 21.500zM12.500 13.500H27V26l-14.500-2z" fill="#fff" />
        </Ico>
        <div className="ml-[13px] flex h-full w-[51px] shrink-0 items-center justify-center border border-b-0 border-[#aaa198] bg-[#857a70]">
          <Ico w={34} h={32}>
            <path d="M2 3h10l2 3h17v20H2z" fill="#edcc69" stroke="#c59b38" />
            <path d="M4 1h12v7H4zM13 3h12v7H13zM19 6h12v7H19z" fill="#fff2b7" stroke="#d9b75f" />
            <path d="M6 3h4" stroke="#37b044" strokeWidth="2" /><path d="M14 5h3" stroke="#d53333" strokeWidth="2" /><path d="M22 7h4" stroke="#2489d5" strokeWidth="2" />
            <path d="M1 9h31v17H1z" fill="#f5df88" />
            <path d="M6 31V20q0-3 3-3h17q3 0 3 3v11h-5v-7H11v7z" fill="#83c9e7" stroke="#4b9bc4" />
          </Ico>
        </div>
        <div className="flex h-full w-[8px] shrink-0 justify-between border-r border-[#8f857b] bg-[#6d6156] pl-[3px]"><i className="w-px bg-[#9d9388]" /></div>
        <Ico w={32} h={32} className="ml-[17px]">
          <path d="M0 0h32q-3 8-2 16t1 16H1Q2 18 0 0z" fill="#6e8fa1" />
          <path d="M0 0h32q-5 8-4 32H7Q8 18 1 12z" fill="#7f9fae" />
          <path d="M2 5q5-4 8-2 5-3 11-1-7 0-10 4-4-2-9-1zM3 11q5-3 8-1 4-4 9-4-5 2-8 7-4-3-9-2z" fill="#fff" />
          <path d="M9 16h12M9 21.500h15M9 27h12" stroke="#dde8ec" strokeWidth="2.400" strokeLinecap="round" />
        </Ico>
        <Ico w={29} h={28} className="ml-[33px]">
          <rect x=".5" y=".5" width="27" height="27" rx="2" fill="#36219a" stroke="#281d4b" />
          <path d="M1 1h26v9H1z" fill="#1b2252" /><path d="M5 11l2-4 6 4z" fill="#d6d92f" /><path d="M4 2l5 6M10 3l-6 5M17 4h5M20 8h5" stroke="#55637c" />
          <text x="6" y="23" fontSize="11" fontWeight="700" fill="#f3c32c" fontFamily="Liberation Serif">T</text>
          <text x="12" y="26" fontSize="11" fontWeight="700" fill="#f3c32c" fontFamily="Liberation Serif">E</text>
          <text x="18" y="23" fontSize="11" fontWeight="700" fill="#f3c32c" fontFamily="Liberation Serif">X</text>
        </Ico>
        <Ico w={33} h={28} className="ml-[30px]">
          <path d="M8 0h24v7H8z" fill="#41a5ee" /><path d="M8 7h24v7H8z" fill="#2b7cd3" /><path d="M8 14h24v7H8z" fill="#185abd" /><path d="M8 21h24v7H8z" fill="#103f91" />
          <rect x="0" y="6" width="16" height="16" rx="1.500" fill="#185abd" />
          <text x="1.500" y="18.500" fontFamily="Open Sans" fontSize="13" fontWeight="700" fill="#fff">W</text>
        </Ico>
        <Ico w={30} h={30} className="ml-[29px]">
          <circle cx="15" cy="15" r="14.500" fill="#31a353" />
          <path d="M2.400 7.800A14.500 14.500 0 0 1 27.600 7.800H15L8.800 18.600z" fill="#db4437" />
          <path d="M27.600 7.800A14.500 14.500 0 0 1 15 29.500l6.200-10.900L15 7.800z" fill="#ffcd40" />
          <circle cx="15" cy="15" r="7" fill="#fff" /><circle cx="15" cy="15" r="5.500" fill="#4285f4" />
        </Ico>
        <Ico w={32} h={31} className="ml-[32px]">
          <rect width="31" height="30.500" rx="10" fill="#3b86f7" />
          <rect x="6" y="10" width="13" height="11" rx="3" fill="#fff" /><path d="M20 14l5-3.500v10L20 17z" fill="#fff" />
        </Ico>
        <div className="ml-[16px] flex h-full">
          <TaskButton>
            <Ico w={30} h={30} className="overflow-visible">
              <path d="M1 2l27-1v28L1 27z" fill="#e2eaf5" stroke="#333" />
              <path d="M2 3l14-.5 3 24L2 25z" fill="#6f9bd6" />
              <path d="M2 5.500h11M2 9h12M2 12.500h15M2 16h15M2 19.500h12M2 23h9" stroke="#e8f0fa" strokeWidth="1.200" />
              <text x="9" y="26.500" fontFamily="Liberation Serif" fontSize="35" fill="#2b323c" textLength="19" lengthAdjust="spacingAndGlyphs">X</text>
            </Ico>
          </TaskButton>
          <TaskButton>
            <Ico w={28} h={28}>
              <rect width="28" height="28" rx="4" fill="#b30b00" />
              <path d="M13 6c3-1 2 5 0 9s-5 8-6 6 5-5 9-5 7 1 5 3-8-6-8-13z" fill="none" stroke="#fff" strokeWidth="1.700" />
            </Ico>
          </TaskButton>
          <TaskButton active>
            <Ico w={32} h={32} className="overflow-visible">
              <path d="M31 .5H3Q.5.500.5 3v26q0 2 2 2.500M2 5.500h14M2 9h15M2 12.500h17M2 16h17M2 19.500h16M2 23h13M2 26.500h10" fill="none" stroke="#292725" />
              <text x="11" y="29" fontFamily="Liberation Serif" fontSize="38" fill="#393633" textLength="20" lengthAdjust="spacingAndGlyphs">X</text>
            </Ico>
          </TaskButton>
          <TaskButton>
            <Ico w={30} h={30}>
              <circle cx="9.500" cy="9.500" r="8.500" fill="#078bcf" /><circle cx="20.500" cy="20.500" r="8.500" fill="#0794d8" /><circle cx="15" cy="15" r="13" fill="#08a8e8" />
              <text x="15" y="22.500" textAnchor="middle" fontFamily="Open Sans" fontSize="21" fontWeight="800" fill="#fff">S</text>
            </Ico>
          </TaskButton>
          <TaskButton>
            <Ico w={30} h={30}>
              <circle cx="15" cy="15" r="13.700" fill="#1c1c20" stroke="#dedede" strokeWidth="1.500" />
              <path d="M15 15C7 14 8 7 11.500 3.500M15 15c4-8 11-3 11 3M15 15c5 8-3 11-8 8" fill="none" stroke="#cacaca" strokeWidth="1.800" />
            </Ico>
          </TaskButton>
        </div>
        <div className="flex-1" />
        <Ico w={31} h={19} className="mt-[3px]">
          <rect x="1" y="1" width="28" height="16.500" fill="none" stroke="#fff" strokeWidth="1.500" />
          <path d="M4 5h23M4 9h23M8 13.500h15" stroke="#fff" strokeWidth="2.600" strokeDasharray="3 1" />
        </Ico>
        <Ico w={9} h={6} className="ml-[14px] mt-[4px]"><path d="M0 5l4-4 4 4z" fill="#fff" /></Ico>
        <Ico w={16} h={16} className="ml-[12px] mt-[4px]"><path d="M1 1v14" stroke="#fff" strokeWidth="1.500" /><path d="M2 2q4-1 6 1t6 1l-2 4q-3 1-5-1T2 8z" fill="#fff" /></Ico>
        <Ico w={17} h={14} className="ml-[8px] mt-[4px]">
          <path d="M2 14v-3M5 14V9M8 14V7M11 14V4" stroke="#fff" strokeWidth="2" /><path d="M14.500 14V1" stroke="#aaa098" strokeWidth="2" />
        </Ico>
        <Ico w={17} h={16} className="ml-[7px] mt-[4px]">
          <path d="M2 1v3M5 1v3M1 5h5v3H1zM3.500 8v7" fill="#fff" stroke="#fff" />
          <rect x="8.500" y="2.500" width="6" height="12" fill="none" stroke="#fff" strokeWidth="1.500" /><path d="M10 1h3" stroke="#fff" />
        </Ico>
        <Ico w={17} h={16} className="ml-[7px] mt-[4px]">
          <path d="M0 5h3l5-4v14l-5-4H0z" fill="#fff" /><path d="M10 6q2 2 0 5M12 4q3.500 4 0 9" fill="none" stroke="#fff" strokeWidth="1.200" />
        </Ico>
        <div className="ml-[15px] mr-[14px] w-[62px] pt-[4px] text-center font-['Open_Sans',sans-serif] text-[12px] leading-[17px] tracking-[-0.7px] text-white">
          11:03
          <br />
          19/02/2021
        </div>
      </div>
    </div>
  );
}

export default function App() {
  return (
    <div className="flex h-[768px] w-[1366px] flex-col overflow-hidden border-[3px] border-[#d91422] bg-[#efefef] font-['DejaVu_Sans_Mono',monospace] text-[11.630px] leading-[16px] text-[#3a3a3a]">
      <TopBars />
      <Toolbars />
      <Workspace />
      <BottomBars />
      <Taskbar />
    </div>
  );
}
